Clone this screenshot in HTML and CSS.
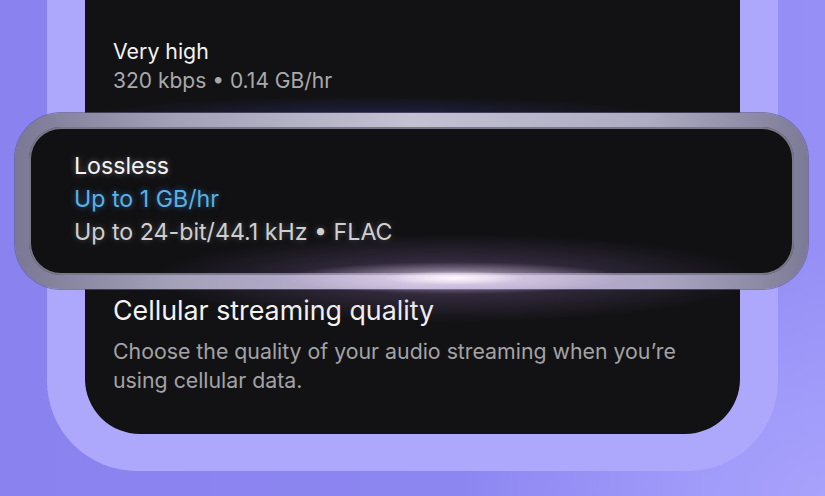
FILE: index.html
```html
<!DOCTYPE html>
<html lang="en">
<head>
<meta charset="utf-8">
<title>Streaming quality</title>
<link rel="stylesheet" href="styles.css">
</head>
<body>
<div class="stage">
  <div class="frame">
    <div class="screen">
      <div class="option">
        <div class="option-name">Very high</div>
        <div class="option-meta">320 kbps • 0.14 GB/hr</div>
      </div>

      <div class="option-selected">
        <div class="option-name">Lossless</div>
        <div class="option-size">Up to 1 GB/hr</div>
        <div class="option-meta">Up to 24-bit/44.1 kHz • FLAC</div>
      </div>

      <div class="section">
        <div class="section-title">Cellular streaming quality</div>
        <p class="section-desc">Choose the quality of your audio streaming when you’re using cellular data.</p>
      </div>
    </div>
  </div>
</div>
</body>
</html>
```

FILE: styles.css
```css
* { box-sizing: border-box; }

html, body {
  margin: 0;
  padding: 0;
}

body {
  font-family: "Inter", "Noto Sans", sans-serif;
  background: #8b85f0;
}

.stage {
  width: 825px;
  height: 496px;
  overflow: hidden;
  background:
    radial-gradient(ellipse 360px 260px at 100% 100%, #a8a2fc 0%, rgba(168,162,252,0) 100%),
    linear-gradient(90deg, #8a83ef 0%, #8c86f1 55%, #958ff6 100%);
}

/* lavender phone body */
.frame {
  margin-left: 47px;
  width: 731px;
  height: 471px;
  padding: 0 38px 37px;
  background: #aea8fc;
  border-radius: 0 0 90px 90px;
}

/* dark app screen */
.screen {
  position: relative;
  height: 100%;
  background: #121214;
  border-radius: 0 0 55px 55px;
  display: flex;
  flex-direction: column;
}

/* bluish haze above the selected card */
.screen::before {
  content: "";
  position: absolute;
  left: 20px;
  top: 78px;
  width: 600px;
  height: 40px;
  background: radial-gradient(ellipse 50% 55% at 45% 100%, rgba(60,62,160,0.38), rgba(60,62,160,0) 100%);
  pointer-events: none;
}

.option {
  height: 113px;
  padding: 36px 28px 0;
}

.option-name {
  color: #f2f2f2;
  font-size: 21.3px;
  line-height: 30px;
}

.option-meta {
  color: #a9a9ab;
  font-size: 21px;
  line-height: 30px;
}

/* highlighted, enlarged row */
.option-selected {
  position: relative;
  z-index: 1;
  margin: 0 -68px 0 -70px;
  height: 176px;
  padding: 23px 45px 0;
  border: 14px solid transparent;
  border-radius: 46px;
  background:
    linear-gradient(#111114, #111114) padding-box,
    linear-gradient(90deg, #7a7894 0%, #a3a1b8 20%, #c3c1d2 50%, #aeacc2 80%, #7c7a96 100%) border-box;
  box-shadow:
    inset 0 0 0 2px rgba(205, 202, 230, 0.55),
    0 0 0 1px rgba(90, 88, 120, 0.6);
}

/* light flare along the bottom edge */
.option-selected::after {
  content: "";
  position: absolute;
  left: 125px;
  bottom: -48px;
  width: 600px;
  height: 90px;
  background:
    radial-gradient(ellipse 70px 7px at 50% 50%, rgba(255,250,255,0.95) 0%, rgba(255,245,255,0) 100%),
    radial-gradient(ellipse 170px 16px at 50% 50%, rgba(245,230,250,0.7) 0%, rgba(240,220,250,0) 100%),
    radial-gradient(ellipse 300px 44px at 50% 50%, rgba(170,130,210,0.35) 0%, rgba(120,90,170,0) 100%);
  pointer-events: none;
}

.option-selected .option-name,
.option-selected .option-size,
.option-selected .option-meta {
  font-size: 23.2px;
  line-height: 33px;
}

.option-selected .option-name {
  color: #f4f4f4;
  text-shadow: 0 0 6px rgba(255,255,255,0.35);
}

.option-size {
  color: #58b2ea;
  text-shadow: 0 0 6px rgba(80,170,240,0.5);
}

.option-selected .option-meta {
  color: #cfcfd2;
  text-shadow: 0 0 6px rgba(255,255,255,0.25);
}

.section {
  padding: 3px 28px 0;
}

.section-title {
  color: #f3f3f3;
  font-size: 26.8px;
  line-height: 36px;
}

.section-desc {
  margin: 9px 0 0;
  color: #a3a3a6;
  font-size: 21.3px;
  line-height: 29px;
  max-width: 600px;
}
```
